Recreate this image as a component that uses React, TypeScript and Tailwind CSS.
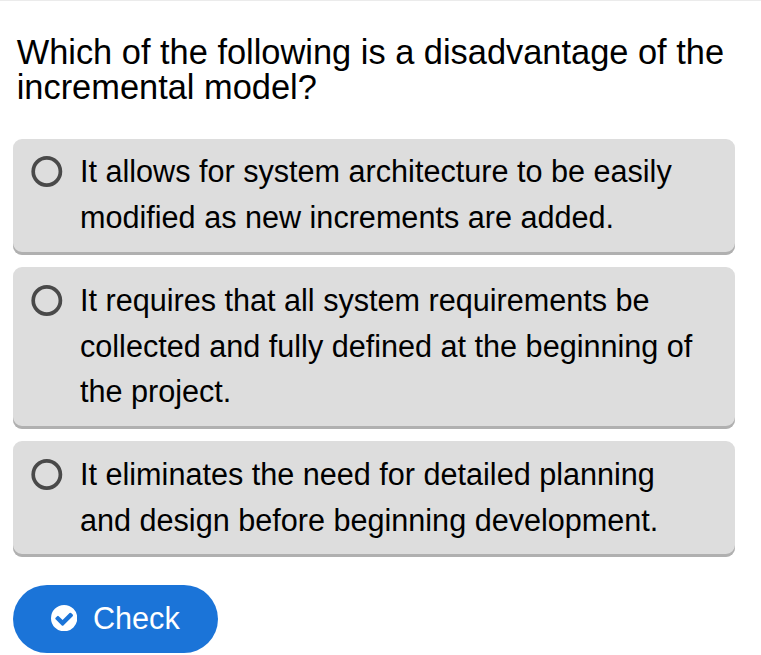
const answers = [
  {
    lines: ["It allows for system architecture to be easily", "modified as new increments are added."],
    box: "h-[116px] pt-[10px]",
  },
  {
    lines: ["It requires that all system requirements be", "collected and fully defined at the beginning of", "the project."],
    box: "h-[162px] pt-[10.8px]",
  },
  {
    lines: ["It eliminates the need for detailed planning", "and design before beginning development."],
    box: "h-[116px] pt-[11px]",
  },
];

function RadioRing() {
  return (
    <svg viewBox="0 0 32 32" className="mt-[7px] mr-[17px] size-8 shrink-0" fill="none" aria-hidden="true">
      <circle cx="15.8" cy="15.5" r="13.6" stroke="#494949" strokeWidth="3.7" />
    </svg>
  );
}

function CheckCircle() {
  return (
    <svg viewBox="128 128 1536 1536" className="mr-[15.7px] mb-[2px] size-[26.3px] shrink-0" fill="currentColor" aria-hidden="true">
      <path
        fillRule="evenodd"
        d="M1412 734q0-28-18-46l-91-90q-19-19-45-19t-45 19l-408 407-226-226q-19-19-45-19t-45 19l-91 90q-18 18-18 46 0 27 18 45l362 362q19 19 45 19 27 0 46-19l543-543q18-18 18-45zM1664 896a768 768 0 1 1-1536 0a768 768 0 1 1 1536 0z"
      />
    </svg>
  );
}

export default function App() {
  return (
    <main className="h-[655px] w-[761px] overflow-hidden border-t border-[#ebebeb] bg-white pl-[13px] font-['Liberation_Sans',Arial,sans-serif] text-black">
      <h1 className="mt-[34px] pl-[3.7px] text-[34.4px] leading-[35px] whitespace-nowrap">
        Which of the following is a disadvantage of the
        <br />
        incremental model?
      </h1>
      <div className="mt-[34px] flex w-[722px] flex-col gap-3" role="radiogroup">
        {answers.map((answer) => (
          <div
            key={answer.lines[0]}
            role="radio"
            aria-checked={false}
            className={`${answer.box} flex rounded-[9px] bg-[#dddddd] pl-[18px] shadow-[inset_0_-3px_0_#b0b0b0]`}
          >
            <RadioRing />
            <div className="text-[30.6px] leading-[45.7px] whitespace-nowrap">
              {answer.lines.map((line) => (
                <div key={line}>{line}</div>
              ))}
            </div>
          </div>
        ))}
      </div>
      <button className="mt-7 flex h-[68px] w-[205px] items-center rounded-full bg-[#1b74d8] pl-[38px] text-[30.6px] text-white">
        <CheckCircle />
        Check
      </button>
    </main>
  );
}
